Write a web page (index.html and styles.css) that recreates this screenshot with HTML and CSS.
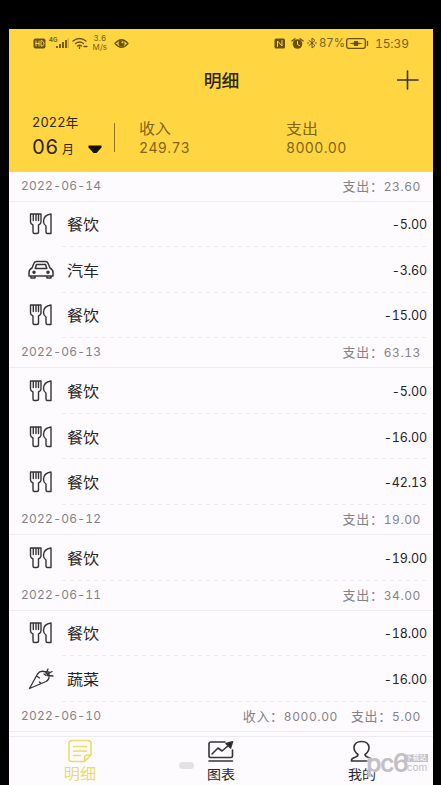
FILE: index.html
```
<!DOCTYPE html>
<html lang="zh-CN">
<head>
<meta charset="utf-8">
<title>明细</title>
<link rel="stylesheet" href="styles.css">
</head>
<body>
<svg class="defs" width="0" height="0">
  <defs>
    <symbol id="meal" viewBox="0 0 24 24">
      <path d="M1.500 2V10q0 2 2.500 3v7q0 1.500 1.500 1.500h2Q9.500 21.500 9.500 20V13q2.500-1 2.500-3V2H9.500V8.500M9.500 2H7M4.300 2V8.500M1.500 2h5.500V8.500M22 2q-7.500 1-7.500 7.500 0 3 2.500 4.500v6q0 1.500 1.500 1.500H22z"/>
    </symbol>
    <symbol id="car" viewBox="0 0 26 20">
      <path d="M4 8L6 3.200Q6.700 1.500 8.500 1.500h9q1.800 0 2.500 1.700L22 8q3 1.500 3 4.500V16H1v-3.500Q1 9.500 4 8zM8.500 4.500h9l1.300 4H7.200zM3 16v2h4V16M19 16v2h4V16"/>
      <circle class="solid" cx="6" cy="12.300" r="1"/><circle class="solid" cx="20" cy="12.300" r="1"/>
    </symbol>
    <symbol id="carrot" viewBox="0 0 26 24">
      <path d="M1.500 21.500L9.500 7Q12 3.500 16 4.500q3.500 1.500 5 4.500 .5 3.500-3 5.500zM8.500 9l3 2M13 16.500L11.500 15M16 7l2 1.500M18 6.500l2-4.500M19 7.500l5-3M19.500 8.500l5.500.5M16 4.500l5 .5v4"/>
    </symbol>
  </defs>
</svg>
<div class="phone">
  <header class="header">
    <div class="status">
      <svg class="hd" width="13" height="11"><rect x=".5" y=".5" width="12" height="10" rx="2"/><path d="M3 3v5M3 5.500h3M6 3v5M8 3v5h1.500Q11 7 11 5.500T9.500 3z"/></svg>
      <span class="gen">4G</span>
      <svg class="signal" width="13" height="11"><path d="M1 8v2M4 6v4M7 4v6M10 2v8"/><path class="faint" d="M12.500 0v10"/></svg>
      <svg class="wifi" width="16" height="12"><path d="M1 4Q7.500-1 14 4M3.500 6.500q4-3 8 0M5.500 9q2-1.500 4 0M7.500 10v1.500M12 9.500h3"/></svg>
      <span class="speed">3.6<br>M/s</span>
      <svg class="eye" width="15" height="11"><path d="M1 5.500Q7.500-2 14 5.500 7.500 13 1 5.500z"/><circle class="fill" cx="7.500" cy="5.500" r="3"/><circle class="glint" cx="8.500" cy="4.300" r="1"/></svg>
      <span class="grow"></span>
      <svg class="nfc" width="12" height="11"><rect x=".5" y=".5" width="10.500" height="10" rx="1.500"/><path d="M3.500 8.500V3l4.500 5V2.500"/></svg>
      <svg class="alarm" width="13" height="11"><circle class="fill" cx="6.500" cy="6" r="4.800"/><path d="M.8 3L4 .8M12.200 3L9 .8"/><path class="hands" d="M6.500 3.500V6.500L8.500 7.500"/></svg>
      <svg class="bt" width="10" height="12"><path d="M2 3.500l6 5L5 11V1l3 2.500-6 5M.5 6h1M8.500 6h1"/></svg>
      <span class="pct">87%</span>
      <svg class="battery" width="23" height="11"><rect x=".7" y=".7" width="18.600" height="9.600" rx="2"/><path d="M21.500 3.500v4"/><path class="fill" d="M3 5.500l5-1V3h4v1.500l5 1-5 1V8H8V6.500z"/></svg>
      <span class="time">15:39</span>
    </div>
    <div class="titlebar"><h1>明细</h1><svg class="plus" width="22" height="20"><path d="M0 10h21M10.500 1v18"/></svg></div>
    <div class="summary">
      <div class="month"><div class="year">2022年</div><div class="pick"><b>06</b><span>月</span><svg width="14" height="9"><path d="M.5.5h13v2L8.500 8h-3L.5 2.500z"/></svg></div></div>
      <div class="divider"></div>
      <div class="total income"><div>收入</div><div>249.73</div></div>
      <div class="total"><div>支出</div><div>8000.00</div></div>
    </div>
  </header>
  <main>
    <section>
      <div class="day"><span>2022-06-14</span><span class="sum">支出：<i>23.60</i></span></div>
      <div class="item"><svg class="icon meal"><use href="#meal"/></svg><div class="name">餐饮</div><div class="amt">-5.00</div></div>
      <div class="item"><svg class="icon car"><use href="#car"/></svg><div class="name">汽车</div><div class="amt">-3.60</div></div>
      <div class="item"><svg class="icon meal"><use href="#meal"/></svg><div class="name">餐饮</div><div class="amt">-15.00</div></div>
    </section>
    <section>
      <div class="day"><span>2022-06-13</span><span class="sum">支出：<i>63.13</i></span></div>
      <div class="item"><svg class="icon meal"><use href="#meal"/></svg><div class="name">餐饮</div><div class="amt">-5.00</div></div>
      <div class="item"><svg class="icon meal"><use href="#meal"/></svg><div class="name">餐饮</div><div class="amt">-16.00</div></div>
      <div class="item"><svg class="icon meal"><use href="#meal"/></svg><div class="name">餐饮</div><div class="amt">-42.13</div></div>
    </section>
    <section>
      <div class="day"><span>2022-06-12</span><span class="sum">支出：<i>19.00</i></span></div>
      <div class="item"><svg class="icon meal"><use href="#meal"/></svg><div class="name">餐饮</div><div class="amt">-19.00</div></div>
    </section>
    <section>
      <div class="day"><span>2022-06-11</span><span class="sum">支出：<i>34.00</i></span></div>
      <div class="item"><svg class="icon meal"><use href="#meal"/></svg><div class="name">餐饮</div><div class="amt">-18.00</div></div>
      <div class="item"><svg class="icon carrot"><use href="#carrot"/></svg><div class="name">蔬菜</div><div class="amt">-16.00</div></div>
    </section>
    <section>
      <div class="day"><span>2022-06-10</span><span class="sum">收入：<i>8000.00</i></span><span class="sum next">支出：<i>5.00</i></span></div>
    </section>
  </main>
  <nav class="tabs">
    <a class="tab active"><svg width="26" height="25"><path d="M5 1.500h16q3 0 3 3V16l-6.500 6.500H5q-3 0-3-3v-15q0-3 3-3zM24 16h-3.500q-3 0-3 3v3.500M6.500 7.500h13M6.500 12h13M6.500 16.500h7"/></svg><span>明细</span></a>
    <a class="tab"><svg width="27" height="25"><path d="M18 3H4Q2 3 2 5v12q0 1.500 2 1.500h20q1.500 0 1.500-1.500v-6M2 22h23.500M5 15l6-6 4 3 7-6"/><path class="solid" d="M19 4.500l6.500-1.800-2 6.300z"/></svg><span>图表</span></a>
    <a class="tab"><svg width="24" height="25"><path d="M8 15.500Q4 12.500 4 8.500 4.500 2.500 11.500 2.500T19 8.500q0 4-4 7 0 2 3.500 3 3.500 1 3 3.500h-20q-.5-2.500 3-3.500 3.500-1 3.500-3z"/></svg><span>我的</span></a>
    <div class="pill"></div>
  </nav>
  <div class="watermark"><strong>pc6</strong><div><em>下载站</em><span>.com</span></div></div>
</div>
</body>
</html>
```

FILE: styles.css
```
* { box-sizing: border-box; }
body { margin: 0; height: 785px; overflow: hidden; background: #000; padding: 29px 8px 0 9px; font-family: Inter, "Noto Sans CJK SC", sans-serif; font-variant-numeric: tabular-nums; }
.defs { position: absolute; }
svg { display: block; flex: none; fill: none; stroke: #353436; stroke-width: 1.3; stroke-linecap: round; stroke-linejoin: round; }
.phone { position: relative; height: 756px; background: #fefbff; display: flex; flex-direction: column; }
.header { height: 142.500px; flex: none; background: #ffd642; color: #2c2508; }
.status { height: 28px; padding: 0 25px 0 24px; display: flex; align-items: center; font-size: 12px; color: #77621b; }
.status svg { stroke: #69530f; stroke-width: 1.3; }
.status .fill { fill: #69530f; stroke: none; }
.grow { flex: 1; }
.hd rect, .nfc rect { fill: #69530f; stroke: none; }
.status .hd path, .status .nfc path, .status .hands { stroke: #ffd642; stroke-width: 1; }
.gen { font-size: 6px; font-weight: 700; margin: -7px 0 0 3px; }
.signal { margin-left: -1px; }
.status .signal path { stroke-width: 1.8; stroke-linecap: butt; }
.signal .faint { opacity: .3; }
.wifi { margin-left: 3px; }
.speed { font-size: 8px; line-height: 9px; text-align: center; width: 17px; margin-left: 3px; letter-spacing: .1px; }
.eye { margin-left: 6px; }
.glint { fill: #ffd642; stroke: none; }
.alarm { margin-left: 5px; }
.bt { margin-left: 3px; }
.status .bt path { stroke-width: 1; }
.pct { width: 27px; margin-left: 2px; font-size: 11.500px; letter-spacing: -.1px; }
.time { width: 33px; margin-left: 6px; font-size: 12px; letter-spacing: -.1px; white-space: nowrap; }
.titlebar { height: 47px; display: flex; align-items: center; justify-content: center; position: relative; }
h1 { margin: 0; font-size: 16.500px; font-weight: 500; line-height: 24px; transform: scaleX(1.08); }
.plus { position: absolute; right: 14px; top: 13px; stroke-width: 1.6; }
.summary { display: flex; padding: 9px 0 0 23px; }
.month { width: 82px; flex: none; }
.year { font-size: 12.800px; line-height: 20px; letter-spacing: .1px; white-space: nowrap; }
.pick { display: flex; align-items: baseline; height: 30px; line-height: 30px; margin-top: -1px; }
.pick b { font-weight: 400; font-size: 20px; width: 30px; letter-spacing: .3px; }
.pick span { font-size: 12px; width: 26px; }
.pick svg path { fill: #171303; stroke: none; }
.divider { width: 1px; height: 29px; margin-top: 10px; background: #8c741f; }
.total { color: #806719; font-size: 14px; line-height: 18.500px; letter-spacing: .35px; padding: 7px 0 0 24px; }
.total div:first-child { font-size: 14.500px; letter-spacing: 0; transform: scaleX(1.1); transform-origin: left; }
.income { width: 147px; }
.day { height: 30px; border-bottom: 1px solid #eeebef; display: flex; align-items: center; padding: 0 12px 2px; font-size: 12px; letter-spacing: .25px; color: #868387; white-space: nowrap; }
.sum { margin-left: auto; letter-spacing: .7px; font-size: 13px; }
.sum i { font-style: normal; font-size: 12px; letter-spacing: .6px; }
.sum.next { margin-left: 13px; }
.item { height: 45.600px; display: flex; align-items: center; padding: 0 6px 0 19px; color: #252426; position: relative; }
.item::after { content: ""; position: absolute; left: 53px; right: 4px; bottom: 0; height: 1px; background: repeating-linear-gradient(90deg, #efeaf0 0 4px, transparent 4px 8px); }
.icon { width: 26px; height: 24px; }
.name { margin-left: 13px; font-size: 14.600px; line-height: 24px; transform: translateY(.5px) scaleX(1.1); transform-origin: left; }
.car { height: 20px; }
.car, .meal { stroke-width: 1.5; }
.meal { stroke-width: 1.4; }
.solid { fill: #252525; }
.amt { margin-left: auto; font-size: 12.500px; letter-spacing: -.1px; padding-top: 1px; }
.tabs { position: relative; margin-top: auto; height: 49px; border-top: 1px solid #eeebf0; display: grid; grid-template-columns: repeat(3, 1fr); flex: none; }
.tab { display: flex; flex-direction: column; align-items: center; padding-top: 2px; font-size: 13px; line-height: 18px; color: #282729; }
.tab svg { stroke-width: 1.6; }
.tab span { margin-top: 1px; transform: scaleX(1.08); }
.active { color: #e9dc6b; font-size: 15px; }
.active svg { stroke: #e9dc6b; }
.pill { position: absolute; left: 170px; top: 25px; width: 15px; height: 7px; border-radius: 4px; background: #e2e1e4; }
.watermark { position: absolute; left: 357px; top: 717px; display: flex; align-items: center; color: #c2c0c5; line-height: 34px; }
.watermark strong { font-size: 25px; width: 37px; letter-spacing: -1.700px; font-weight: 600; text-shadow: 0 0 2px #fff; }
.watermark div { display: flex; flex-direction: column; line-height: 10px; margin-left: 1px; }
.watermark em { font-size: 7px; font-style: normal; line-height: 8px; width: 24px; background: #c4c2c7; color: #fff; text-align: center; }
.watermark span { font-size: 10px; }
```
